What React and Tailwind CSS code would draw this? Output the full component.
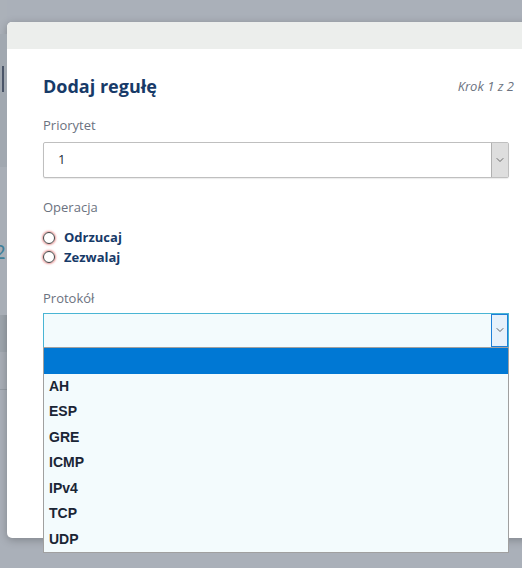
import { ChevronDown } from 'lucide-react'

const protocols = ['AH', 'ESP', 'GRE', 'ICMP', 'IPv4', 'TCP', 'UDP']
const operations = ['Odrzucaj', 'Zezwalaj']

function Backdrop() {
  return (
    <div className="flex w-[7px] shrink-0 flex-col">
      <div className="h-[34px] bg-[#abb1b9]" />
      <div className="relative h-[133px] bg-[#a1a8b0]">
        <div className="absolute left-[2px] top-[32px] h-[26px] w-[2px] bg-[#4a5568]" />
      </div>
      <div className="relative h-[148px] bg-[#a8aeb6]">
        <span className="absolute left-[-6px] top-[74px] text-[20px] leading-none text-[#3f7f99]" style={{ fontFamily: 'Lato, sans-serif' }}>2</span>
      </div>
      <div className="h-[37px] bg-[#9ea5ad]" />
      <div className="h-[38px] border-b border-[#959ca4] bg-[#a8aeb6]" />
      <div className="flex-1 bg-[#aab0b9]" />
    </div>
  )
}

export default function App() {
  return (
    <div className="flex h-[568px] w-[522px] overflow-hidden bg-[#aab0b9]" style={{ fontFamily: '"Open Sans", sans-serif' }}>
      <Backdrop />
      <div className="mt-[22px] h-[516px] w-[540px] shrink-0 rounded-l-[5px] bg-white shadow-[0_2px_8px_rgba(0,0,0,0.25)]">
        <div className="h-[27px] rounded-tl-[5px] bg-[#eceeec]" />
        <div className="w-[522px] pl-[36px] pr-[15px] pt-[24px]">
          <div className="flex items-center justify-between">
            <h2 className="text-[18px] font-bold text-[#173a68]">Dodaj regułę</h2>
            <span className="text-[13px] italic text-[#6b7280]">Krok 1 z 2</span>
          </div>

          <div className="mt-[16px] text-[13px] text-[#6b7280]">Priorytet</div>
          <div className="mt-[6px] flex h-[36px] w-[466px] items-stretch rounded-[2px] border border-[#bfbfbf] bg-white shadow-[0_1px_1px_rgba(0,0,0,0.08)]">
            <div className="flex flex-1 items-center pl-[14px] text-[13px] text-[#1e2a3a]">1</div>
            <div className="flex w-[17px] items-center justify-center border-l border-[#b0b0b0] bg-[#dedede]">
              <ChevronDown size={12} strokeWidth={1.5} className="text-[#444]" />
            </div>
          </div>

          <div className="mt-[20px] text-[13px] text-[#6b7280]">Operacja</div>
          <div className="mt-[11px] flex flex-col">
            {operations.map(op => (
              <label key={op} className="flex items-center gap-[9px]">
                <span className="h-[12px] w-[12px] rounded-full border border-[#444] shadow-[0_0_2px_1px_rgba(220,80,80,0.6)]" />
                <span className="text-[13px] font-bold text-[#173a68]">{op}</span>
              </label>
            ))}
          </div>

          <div className="mt-[22px] text-[13px] text-[#6b7280]">Protokół</div>
          <div className="relative mt-[4px] w-[466px]">
            <div className="flex h-[35px] items-stretch border border-[#49b5d4] bg-[#f3fbfd]">
              <div className="flex-1" />
              <div className="flex w-[17px] items-center justify-center border border-[#1e7fd8] bg-[#e6f1fb]">
                <ChevronDown size={12} strokeWidth={1.5} className="text-[#333]" />
              </div>
            </div>
            <ul className="absolute left-0 top-[34px] z-10 w-[466px] border border-[#a0a0a0] bg-[#f3fbfd]" style={{ fontFamily: '"Liberation Sans", Arial, sans-serif' }}>
              <li className="h-[26px] bg-[#0078d4]" />
              {protocols.map(p => (
                <li key={p} className="flex h-[25.5px] items-center pl-[5px] text-[14px] font-bold text-[#1a2535]">{p}</li>
              ))}
            </ul>
          </div>
        </div>
      </div>
    </div>
  )
}
